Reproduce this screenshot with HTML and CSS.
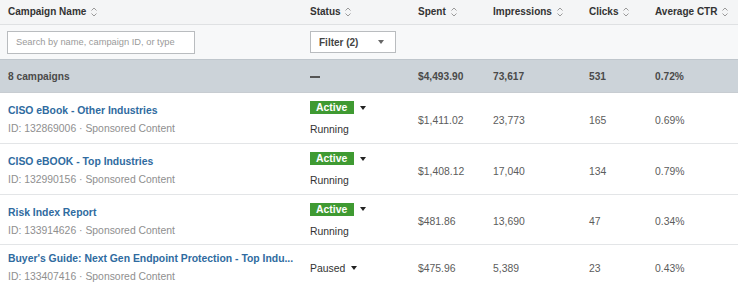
FILE: index.html
```html
<!DOCTYPE html>
<html>
<head>
<meta charset="utf-8">
<link rel="stylesheet" href="styles.css">
</head>
<body>
<table class="grid">
  <colgroup>
    <col class="c-name"><col class="c-status"><col class="c-spent"><col class="c-impr"><col class="c-clicks"><col class="c-ctr">
  </colgroup>
  <thead>
    <tr class="head">
      <th>Campaign Name <svg class="sort" viewBox="0 0 8 12"><path d="M1.5 4.5 L4 2 L6.5 4.5 M1.5 7.5 L4 10 L6.5 7.5"/></svg></th>
      <th>Status <svg class="sort" viewBox="0 0 8 12"><path d="M1.5 4.5 L4 2 L6.5 4.5 M1.5 7.5 L4 10 L6.5 7.5"/></svg></th>
      <th>Spent <svg class="sort" viewBox="0 0 8 12"><path d="M1.5 4.5 L4 2 L6.5 4.5 M1.5 7.5 L4 10 L6.5 7.5"/></svg></th>
      <th>Impressions <svg class="sort" viewBox="0 0 8 12"><path d="M1.5 4.5 L4 2 L6.5 4.5 M1.5 7.5 L4 10 L6.5 7.5"/></svg></th>
      <th>Clicks <svg class="sort" viewBox="0 0 8 12"><path d="M1.5 4.5 L4 2 L6.5 4.5 M1.5 7.5 L4 10 L6.5 7.5"/></svg></th>
      <th>Average CTR <svg class="sort" viewBox="0 0 8 12"><path d="M1.5 4.5 L4 2 L6.5 4.5 M1.5 7.5 L4 10 L6.5 7.5"/></svg></th>
    </tr>
    <tr class="filters">
      <td><div class="search">Search by name, campaign ID, or type</div></td>
      <td><div class="filter-btn"><span>Filter (2)</span><span class="tri"></span></div></td>
      <td></td><td></td><td></td><td></td>
    </tr>
  </thead>
  <tbody>
    <tr class="summary">
      <td>8 campaigns</td>
      <td><span class="dash"></span></td>
      <td>$4,493.90</td>
      <td>73,617</td>
      <td>531</td>
      <td>0.72%</td>
    </tr>
    <tr class="row">
      <td><a class="name">CISO eBook - Other Industries</a><div class="meta">ID: 132869006 · Sponsored Content</div></td>
      <td><div class="status"><span class="badge">Active</span><span class="tri"></span></div><div class="sub">Running</div></td>
      <td>$1,411.02</td><td>23,773</td><td>165</td><td>0.69%</td>
    </tr>
    <tr class="row">
      <td><a class="name">CISO eBOOK - Top Industries</a><div class="meta">ID: 132990156 · Sponsored Content</div></td>
      <td><div class="status"><span class="badge">Active</span><span class="tri"></span></div><div class="sub">Running</div></td>
      <td>$1,408.12</td><td>17,040</td><td>134</td><td>0.79%</td>
    </tr>
    <tr class="row">
      <td><a class="name">Risk Index Report</a><div class="meta">ID: 133914626 · Sponsored Content</div></td>
      <td><div class="status"><span class="badge">Active</span><span class="tri"></span></div><div class="sub">Running</div></td>
      <td>$481.86</td><td>13,690</td><td>47</td><td>0.34%</td>
    </tr>
    <tr class="row">
      <td><a class="name">Buyer's Guide: Next Gen Endpoint Protection - Top Indu...</a><div class="meta">ID: 133407416 · Sponsored Content</div></td>
      <td><div class="status"><span class="plain">Paused</span><span class="tri"></span></div></td>
      <td>$475.96</td><td>5,389</td><td>23</td><td>0.43%</td>
    </tr>
  </tbody>
</table>
</body>
</html>
```

FILE: styles.css
```css
html, body {
  margin: 0;
  padding: 0;
  background: #ffffff;
}
body {
  font-family: "Liberation Sans", Arial, sans-serif;
  font-size: 10.4px;
  color: #555;
  width: 738px;
  overflow: hidden;
}
.grid {
  width: 738px;
  border-collapse: collapse;
  table-layout: fixed;
}
.c-name { width: 302px; }
.c-status { width: 108px; }
.c-spent { width: 75px; }
.c-impr { width: 96px; }
.c-clicks { width: 66px; }
.c-ctr { width: 91px; }

th, td {
  padding: 0 0 0 8px;
  text-align: left;
  vertical-align: middle;
  white-space: nowrap;
  overflow: hidden;
}
.head th {
  height: 24px;
  background: #f4f5f6;
  border-bottom: 1px solid #dfe1e3;
  font-weight: bold;
  font-size: 10px;
  color: #333;
}
.sort {
  width: 8px;
  height: 12px;
  vertical-align: -3px;
  margin-left: 1px;
}
.sort path {
  fill: none;
  stroke: #9a9a9a;
  stroke-width: 1;
}
.filters td {
  height: 34px;
  background: #f7f8f9;
  padding-left: 7px;
}
.filters td:nth-child(2) { padding-left: 8px; }
.search {
  width: 178px;
  height: 21px;
  border: 1px solid #b9bcbf;
  background: #fff;
  color: #9a9a9a;
  font-size: 9.3px;
  line-height: 21px;
  padding-left: 8px;
}
.filter-btn {
  width: 76px;
  height: 20px;
  border: 1px solid #b9bcbf;
  background: #fff;
  display: flex;
  align-items: center;
  padding-left: 8px;
  gap: 20px;
  color: #444;
  font-weight: bold;
  font-size: 10px;
}
.filter-btn .tri { border-top-color: #666; }
.tri {
  display: inline-block;
  width: 0;
  height: 0;
  border-left: 3.5px solid transparent;
  border-right: 3.5px solid transparent;
  border-top: 4px solid #222;
}
.summary td {
  height: 32px;
  background: #ccd3d9;
  border-top: 1px solid #bfc6cc;
  border-bottom: 1px solid #c7ccd1;
  font-weight: bold;
  color: #4a4a4a;
  font-size: 10.2px;
}
.dash {
  display: inline-block;
  width: 10px;
  height: 2px;
  background: #555;
  vertical-align: middle;
}
.row td {
  height: 46px;
  padding-top: 4px;
  border-bottom: 1px solid #e3e5e7;
  color: #5c5c5c;
}
.row:nth-child(4) td { height: 45px; }
.row:last-child td { height: 38px; }
.name {
  display: block;
  color: #2f6ba0;
  font-weight: bold;
  font-size: 10.4px;
  line-height: 18px;
  text-decoration: none;
}
.meta {
  color: #8f8f8f;
  line-height: 18px;
}
.status {
  display: flex;
  align-items: center;
  gap: 6px;
}
.badge {
  background: #3f9a32;
  color: #fff;
  font-weight: bold;
  font-size: 10.4px;
  line-height: 13px;
  height: 13px;
  padding: 0 7px 0 6px;
}
.plain {
  color: #333;
}
.sub {
  color: #333;
  line-height: 18px;
  margin-top: 7px;
}
```
